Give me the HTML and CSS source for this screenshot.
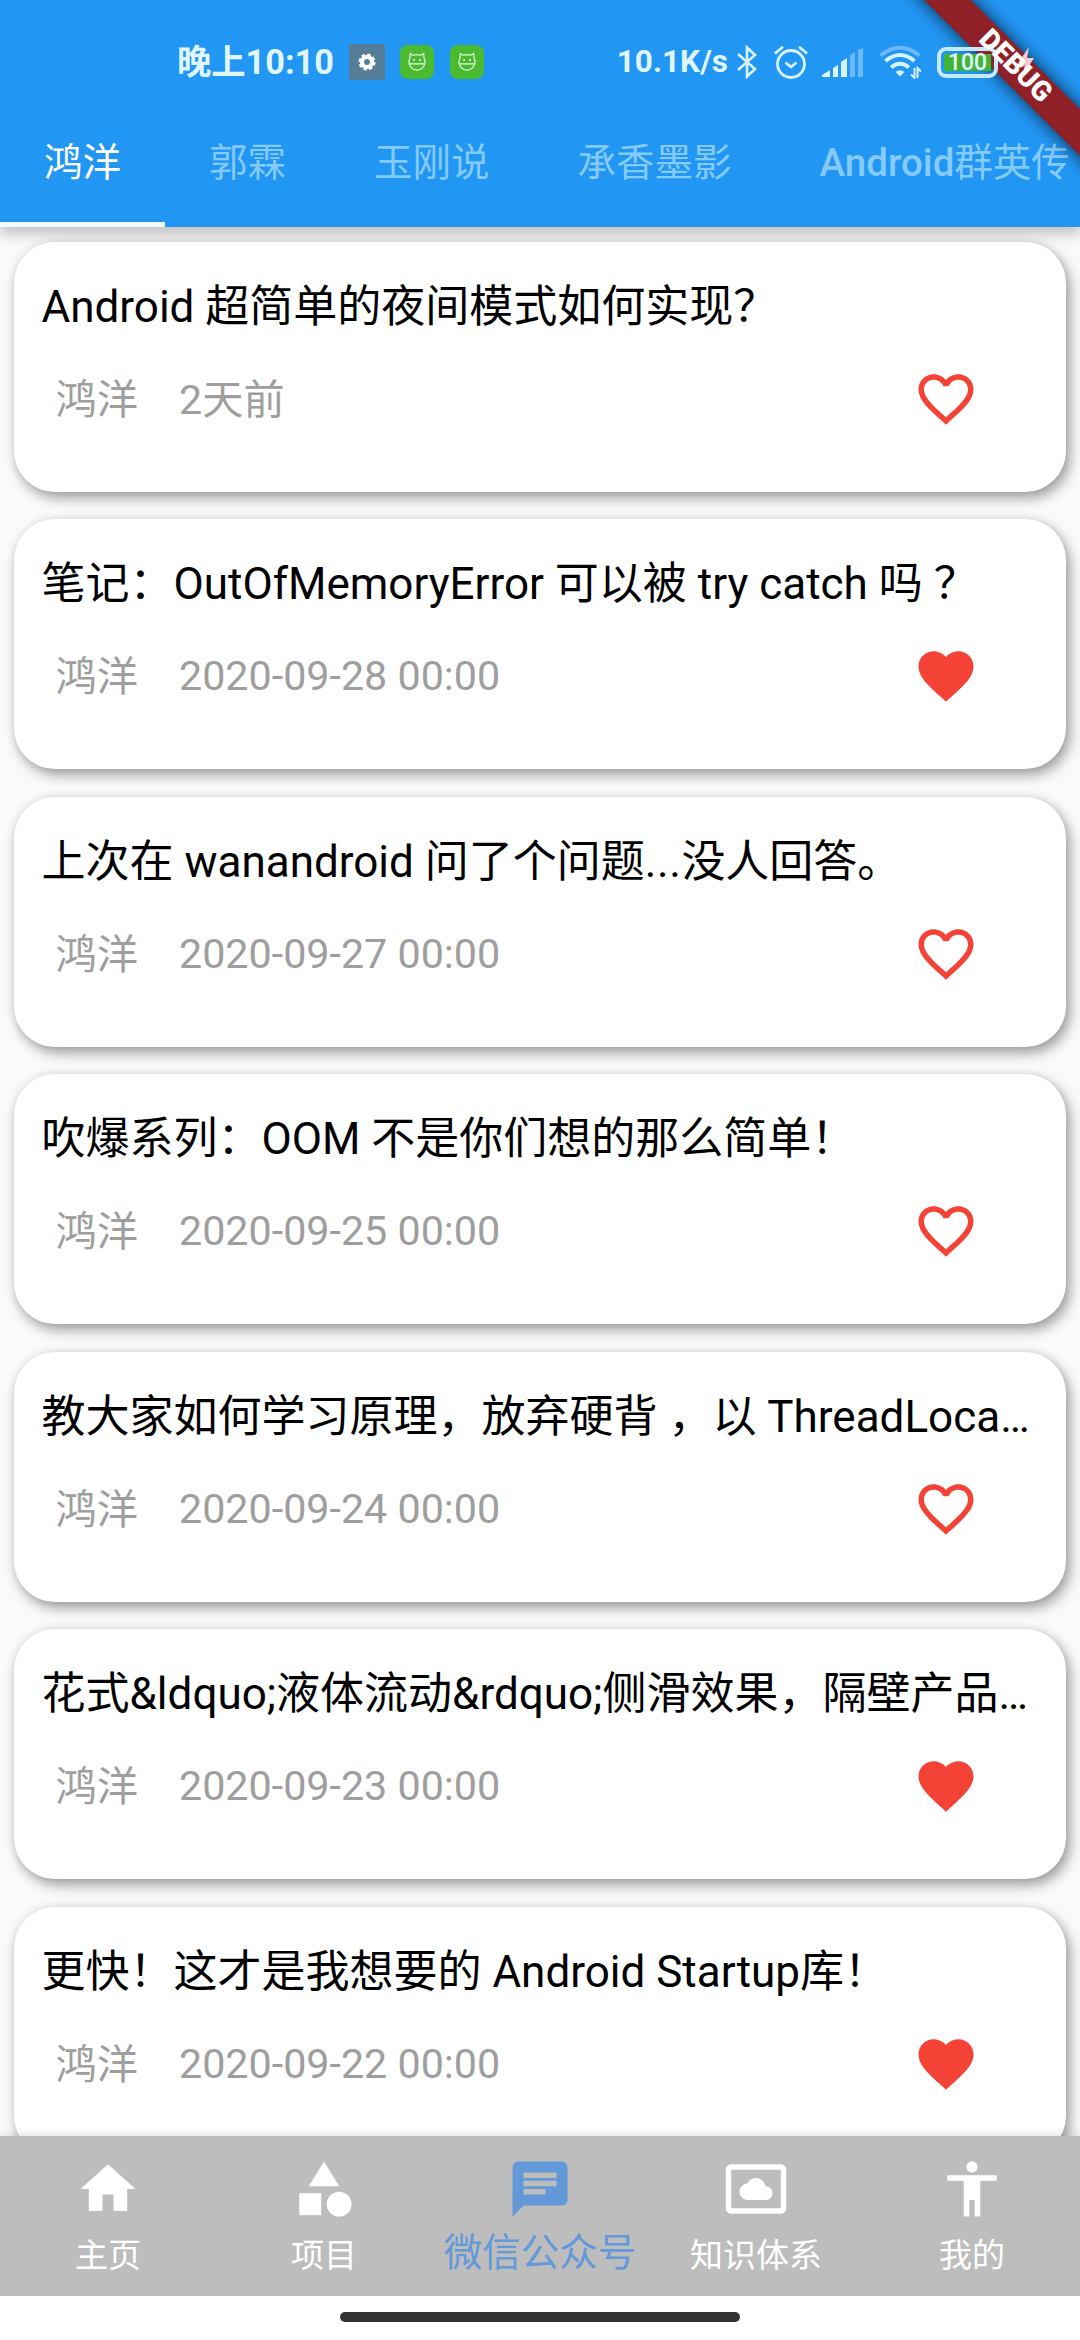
FILE: index.html
```html
<!DOCTYPE html>
<html lang="zh-CN">
<head>
<meta charset="utf-8">
<title>微信公众号</title>
<link rel="stylesheet" href="styles.css">
</head>
<body>
<svg class="defs" width="0" height="0">
  <symbol id="heart-line" viewBox="0 0 24 24"><path d="M16.5 3c-1.74 0-3.41.81-4.5 2.09C10.91 3.81 9.24 3 7.5 3 4.42 3 2 5.42 2 8.5c0 3.78 3.4 6.86 8.55 11.54L12 21.35l1.45-1.32C18.6 15.36 22 12.28 22 8.5 22 5.42 19.58 3 16.5 3zm-4.4 15.55l-.1.1-.1-.1C7.14 14.24 4 11.39 4 8.5 4 6.5 5.5 5 7.5 5c1.54 0 3.04.99 3.57 2.36h1.87C13.46 5.99 14.96 5 16.5 5c2 0 3.5 1.5 3.5 3.5 0 2.89-3.14 5.74-7.9 10.05z"/></symbol>
  <symbol id="heart-full" viewBox="0 0 24 24"><path d="M12 21.35l-1.45-1.32C5.4 15.36 2 12.28 2 8.5 2 5.42 4.42 3 7.5 3c1.74 0 3.41.81 4.5 2.09C13.09 3.81 14.76 3 16.5 3 19.58 3 22 5.42 22 8.5c0 3.78-3.4 6.86-8.55 11.54L12 21.35z"/></symbol>
  <symbol id="hippo" viewBox="0 0 34 34">
    <rect width="34" height="34" rx="8" fill="#4abb31"/>
    <g fill="none" stroke="#e6fbe0" stroke-width="1.2">
      <path d="M10 13L10.3 8.5L13 10.2C15.500 9.400 18.500 9.400 21 10.2L23.700 8.500L24 13C25.500 16 25.300 20 22.500 22.800C19.500 25.800 14.500 25.800 11.500 22.800C8.700 20 8.500 16 10 13ZM9 18.800H25"/>
    </g>
    <circle cx="14" cy="15" r="1" fill="#e6fbe0"/><circle cx="20" cy="15" r="1" fill="#e6fbe0"/>
  </symbol>
</svg>

<div class="screen">
  <header class="header">
    <div class="status">
      <div class="status-left">
        <span class="clock">晚上10:10</span>
        <svg class="gear" viewBox="0 0 36 36"><rect width="36" height="36" fill="#567d98"/><circle cx="18" cy="18" r="5" fill="none" stroke="#fff" stroke-width="4.200"/><circle cx="18" cy="18" r="7.300" fill="none" stroke="#fff" stroke-width="2.400" stroke-dasharray="3.500 2.230"/></svg>
        <svg class="app"><use href="#hippo"/></svg>
        <svg class="app"><use href="#hippo"/></svg>
      </div>
      <div class="status-right">
        <span class="speed">10.1K/s</span>
        <svg class="bt" viewBox="0 0 22 34" fill="none" stroke="#d8f3ff" stroke-width="2.600"><path d="M2 9L19 24L11 31.500V2.500L19 10L2 25"/></svg>
        <svg class="alarm" viewBox="0 0 36 34" fill="none" stroke="#d8f3ff" stroke-width="2.800"><circle cx="18" cy="19" r="13.500"/><path d="M12.500 17.500L18 22L23.500 17.500M2 8.500L10 1.800M34 8.500L26 1.800"/></svg>
        <svg class="signal" viewBox="0 0 41 29"><path fill="#d8f3ff" d="M0 29V27L8 22V29ZM11 29V20L16 17V29ZM19 29V14L25 10V29Z"/><path fill="#6abaf9" d="M28 29V7L33 4V29ZM36 29V2L41 0V29Z"/></svg>
        <svg class="wifi" viewBox="0 0 42 34" fill="none"><path d="M1.500 10.500Q21-5 40.500 10.500" stroke="#6abaf9" stroke-width="4"/><path d="M6.500 16Q21 4 35.500 16M12 22.500Q21 15 30 22.500" stroke="#d8f3ff" stroke-width="4"/><path d="M16.500 27Q21 23.500 25.500 27L21 31.500Z" fill="#d8f3ff"/><path d="M35.500 23V33L32 29.500M38.500 33V23L42 26.500" stroke="#d8f3ff" stroke-width="2"/></svg>
        <span class="battery">100</span>
      </div>
    </div>
    <nav class="tabs">
      <span class="tab tab-active">鸿洋</span>
      <span class="tab">郭霖</span>
      <span class="tab">玉刚说</span>
      <span class="tab">承香墨影</span>
      <span class="tab"><b>Android</b>群英传</span>
    </nav>
  </header>

  <main class="list">
    <article class="card"><h2>Android 超简单的夜间模式如何实现？</h2><div class="meta"><span class="author">鸿洋</span><time class="relative-day">2天前</time><svg class="like"><use href="#heart-line"/></svg></div></article>
    <article class="card"><h2>笔记：OutOfMemoryError 可以被 try catch 吗 ？</h2><div class="meta"><span class="author">鸿洋</span><time>2020-09-28 00:00</time><svg class="like"><use href="#heart-full"/></svg></div></article>
    <article class="card"><h2>上次在 wanandroid 问了个问题<span class="dots">...</span>没人回答。</h2><div class="meta"><span class="author">鸿洋</span><time>2020-09-27 00:00</time><svg class="like"><use href="#heart-line"/></svg></div></article>
    <article class="card"><h2>吹爆系列：OOM 不是你们想的那么简单！</h2><div class="meta"><span class="author">鸿洋</span><time>2020-09-25 00:00</time><svg class="like"><use href="#heart-line"/></svg></div></article>
    <article class="card"><h2>教大家如何学习原理，放弃硬背 ，以 ThreadLoca…</h2><div class="meta"><span class="author">鸿洋</span><time>2020-09-24 00:00</time><svg class="like"><use href="#heart-line"/></svg></div></article>
    <article class="card"><h2>花式&amp;ldquo;液体流动&amp;rdquo;侧滑效果，隔壁产品…</h2><div class="meta"><span class="author">鸿洋</span><time>2020-09-23 00:00</time><svg class="like"><use href="#heart-full"/></svg></div></article>
    <article class="card"><h2>更快！这才是我想要的 Android Startup库！</h2><div class="meta"><span class="author">鸿洋</span><time>2020-09-22 00:00</time><svg class="like"><use href="#heart-full"/></svg></div></article>
  </main>

  <nav class="bottom">
    <a class="item"><svg viewBox="0 0 24 24"><path d="M10 20v-6h4v6h5v-8h3L12 3 2 12h3v8z"/></svg><span>主页</span></a>
    <a class="item"><svg viewBox="0 0 24 24"><path d="M12 2l-5.500 9h11z"/><circle cx="17.500" cy="17.500" r="4.500"/><path d="M3 13.500h8v8H3z"/></svg><span>项目</span></a>
    <a class="item item-active"><svg viewBox="0 0 24 24"><path d="M20 2H4c-1.100 0-1.990.9-1.990 2L2 22l4-4h14c1.100 0 2-.9 2-2V4c0-1.100-.9-2-2-2zM6 9h12v2H6V9zm8 5H6v-2h8v2zm4-6H6V6h12v2z"/></svg><span>微信公众号</span></a>
    <a class="item"><svg viewBox="0 0 24 24"><path d="M9 16h6.500c1.380 0 2.500-1.120 2.500-2.500S16.880 11 15.500 11h-.05c-.24-1.690-1.690-3-3.450-3-1.400 0-2.600.83-3.160 2.020h-.16C7.170 10.180 6 11.450 6 13c0 1.660 1.340 3 3 3zM21 3H3c-1.100 0-2 .9-2 2v14c0 1.100.9 2 2 2h18c1.100 0 2-.9 2-2V5c0-1.100-.9-2-2-2zm0 16.010H3V4.990h18v14.020z"/></svg><span>知识体系</span></a>
    <a class="item"><svg viewBox="0 0 24 24"><path d="M12 2c1.100 0 2 .9 2 2s-.9 2-2 2-2-.9-2-2 .9-2 2-2zm9 7h-6v13h-2v-6h-2v6H9V9H3V7h18v2z"/></svg><span>我的</span></a>
  </nav>
  <footer class="gesture"><span class="pill"></span></footer>

  <div class="ribbon-corner">
    <div class="ribbon"></div>
    <svg class="bolt" viewBox="0 0 18 28"><path d="M12 0L1 16H8L6 28L17 11H10Z" fill="#f6c9d4"/></svg>
    <div class="ribbon ribbon-text">DEBUG</div>
  </div>
</div>
</body>
</html>
```
FILE: styles.css
```css
* { box-sizing: border-box; }
body {
  margin: 0;
  background: #fafafa;
  font-family: Roboto, "Noto Sans CJK SC", sans-serif;
}
.defs { display: block; position: absolute; }
.screen {
  position: relative;
  display: flex;
  flex-direction: column;
  width: 1080px;
  height: 2340px;
  overflow: hidden;
}

/* header */
.header {
  flex: none;
  height: 227px;
  background: #2196f3;
  box-shadow: 0 6px 14px rgba(0, 0, 0, .26);
}
.status {
  display: flex;
  justify-content: space-between;
  height: 97px;
  padding: 27px 82px 0 177px;
  color: #e0f6ff;
}
.status-left, .status-right { display: flex; align-items: center; height: 70px; }
.status-right { position: relative; z-index: 2; }
.clock { width: 172px; font-size: 34.3px; font-weight: 700; line-height: 72px; white-space: nowrap; }
.gear { width: 36px; height: 36px; margin-right: 15px; }
.app { width: 34px; height: 34px; margin-right: 16px; }
.speed { font-size: 31.5px; font-weight: 700; line-height: 72px; }
.bt { width: 22px; height: 34px; margin-left: 8px; }
.alarm { width: 36px; height: 34px; margin-left: 15px; }
.signal { width: 41px; height: 29px; margin-left: 13px; }
.wifi { width: 42px; height: 34px; margin-left: 16px; }
.battery {
  width: 61px;
  height: 31px;
  margin-left: 16px;
  border: 4px solid #c5e9ff;
  border-radius: 9px;
  background: linear-gradient(#40b430, #40b430) center / 47px 17px no-repeat;
  font-size: 23px;
  font-weight: 500;
  line-height: 24px;
  text-align: center;
}
.tabs { display: flex; height: 130px; }
.tab {
  flex: none;
  height: 130px;
  padding: 0 44px;
  border-bottom: 5px solid transparent;
  color: #84cbfb;
  font-size: 38.5px;
  line-height: 131px;
  white-space: nowrap;
}
.tab b { font-weight: 500; }
.tab-active { color: #fff; border-color: #f4fdff; }

/* articles */
.list {
  flex: 1;
  min-height: 0;
  display: flex;
  flex-direction: column;
  gap: 27.6px;
  padding: 14.5px 14px 0;
}
.card {
  flex: none;
  height: 250px;
  padding: 31px 27px 0 27.5px;
  border-radius: 41px;
  background: #fff;
  box-shadow: 4px 6px 13px rgba(0, 0, 0, .36), 0 0 10px rgba(0, 0, 0, .08);
}
.card h2 {
  margin: 0;
  color: #000;
  font-size: 44px;
  font-weight: 400;
  line-height: 68px;
  white-space: nowrap;
}
.dots { letter-spacing: .6px; }
.meta {
  display: flex;
  align-items: flex-start;
  height: 66px;
  margin-top: 25px;
  padding: 0 60px 0 14px;
  color: #9e9e9e;
  font-size: 41.25px;
  line-height: 66px;
}
.meta time { margin-left: 41px; }
.meta .author, .meta .relative-day { line-height: 69px; }
.like { width: 66px; height: 66px; margin-left: auto; fill: #f44336; }

/* bottom navigation */
.bottom {
  position: relative;
  flex: none;
  display: flex;
  height: 160px;
  background: #bdbdbd;
  box-shadow: 0 0 10px rgba(0, 0, 0, .16);
}
.item {
  flex: 1;
  display: flex;
  flex-direction: column;
  align-items: center;
  padding-top: 20px;
  color: #fff;
  font-size: 33px;
  white-space: nowrap;
}
.item svg { flex: none; width: 66px; height: 66px; fill: currentColor; }
.item span { line-height: 44px; margin-top: 12px; }
.item-active { color: #6399d8; font-size: 38.5px; }
.item-active span { margin-top: 9px; }
.gesture {
  position: relative;
  flex: none;
  display: flex;
  justify-content: center;
  height: 44px;
  padding-top: 16px;
  background: #fff;
}
.pill { width: 400px; height: 10px; border-radius: 5px; background: #333; }

/* corner ribbon */
.ribbon-corner {
  position: absolute;
  top: 0;
  right: 0;
  width: 230px;
  height: 230px;
  overflow: hidden;
}
.ribbon {
  position: absolute;
  left: -36px;
  top: 49.5px;
  width: 400px;
  height: 33px;
  transform: rotate(45deg);
  background: #8f2027;
  box-shadow: 0 0 17px rgba(0, 0, 0, .75);
}
.ribbon-text {
  z-index: 3;
  left: -34.5px;
  top: 48.5px;
  background: none;
  box-shadow: none;
  color: #fff;
  font-size: 28px;
  font-weight: 900;
  line-height: 33px;
  text-align: center;
}
.bolt { position: absolute; left: 167px; top: 47px; width: 18px; height: 28px; }
```
